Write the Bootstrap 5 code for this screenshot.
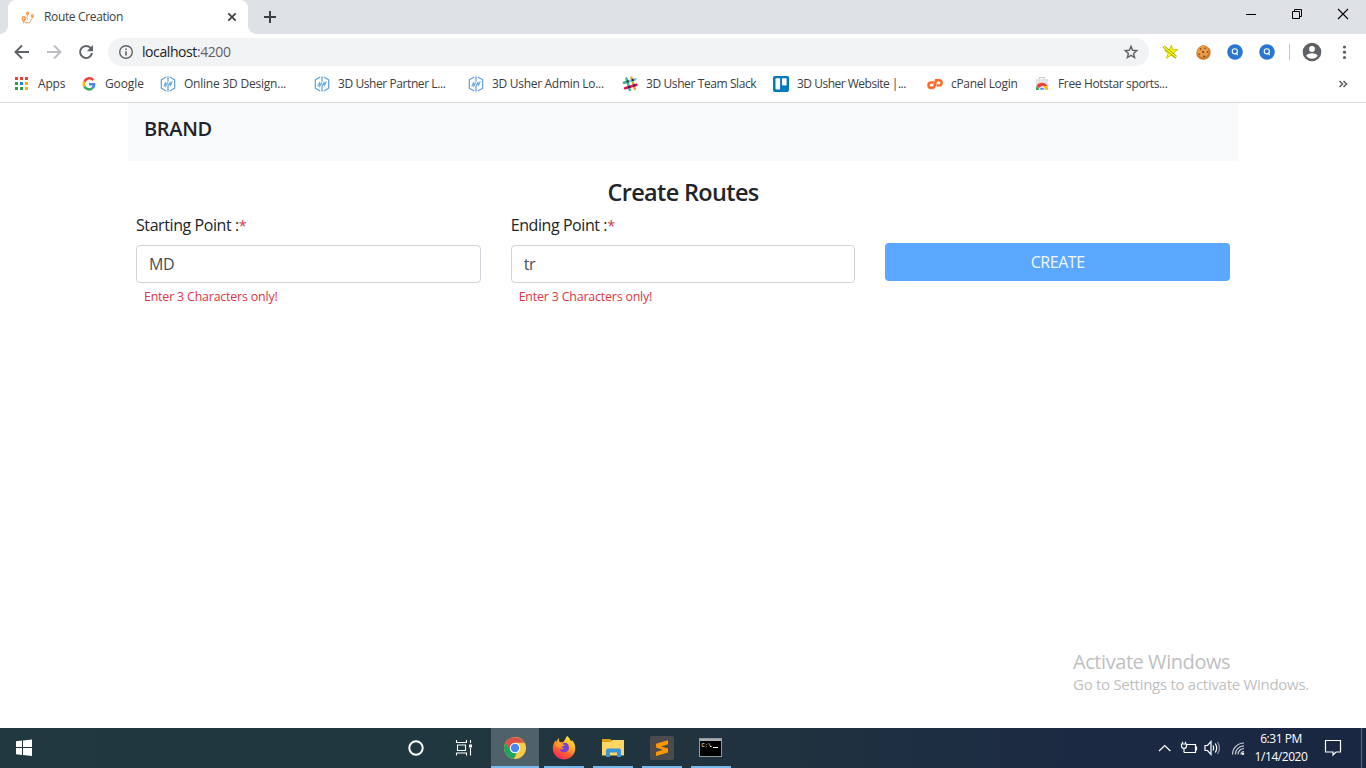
<!DOCTYPE html>
<html lang="en">
<head>
<meta charset="utf-8">
<meta name="viewport" content="width=device-width, initial-scale=1">
<title>Route Creation</title>
<link href="https://cdn.jsdelivr.net/npm/bootstrap@5.3.0/dist/css/bootstrap.min.css" rel="stylesheet">
<style>
body{font-family:"Open Sans","Noto Sans",sans-serif;color:#212529;overflow:hidden}
svg{display:block;flex:none}
.ui-text{font-size:12px;line-height:16px;white-space:nowrap;color:#3c4043}
/* browser chrome */
.tab-strip{height:34px;background:#dee1e6;padding-left:8px}
.browser-tab{width:240px;height:34px;background:#fff;border-radius:8px 8px 0 0;padding:0 10px 0 12px}
.browser-tab::before,.browser-tab::after{content:"";position:absolute;bottom:0;width:8px;height:8px}
.browser-tab::before{left:-8px;background:radial-gradient(circle at 0 0,#dee1e6 7.5px,#fff 8px)}
.browser-tab::after{right:-8px;background:radial-gradient(circle at 100% 0,#dee1e6 7.5px,#fff 8px)}
.tab-title{letter-spacing:-.35px;margin-left:8px}
.window-buttons{padding-right:4px}
.toolbar{height:36px;padding:0 13px 0 13px}
.nav-gap{margin-left:14px}
.omnibox{flex:none;width:1041px;height:28px;border-radius:14px;background:#f1f3f4;margin-left:13px;padding:0 10px}
.address{font-size:14px;line-height:20px;letter-spacing:-.42px;margin-left:8px;color:#202124}
.address span{color:#5f6368}
.extensions{padding-left:13px;gap:16px}
.bookmarks{height:33px;border-bottom:1px solid #dadce0;padding:0 14px 4px}
.bookmark svg{margin-right:8px}
.bookmark{letter-spacing:-.36px}
.bm-1{width:68px;letter-spacing:-.2px}.bm-2{width:78px;letter-spacing:-.1px}.bm-3{width:154px;letter-spacing:-.22px}
.bm-4{width:154px;letter-spacing:-.42px}.bm-5{width:154px;letter-spacing:-.3px}.bm-6{width:151px;letter-spacing:-.4px}
.bm-7{width:154px;letter-spacing:-.5px}.bm-8{width:107px;letter-spacing:-.32px}
/* page */
.page{height:625px}
.page-inner{width:1110px;margin:0 auto}
.brand-bar{height:58px;background:#f8f9fb;padding:11px 16px}
.brand-name{font-size:20px;line-height:30px;font-weight:540;letter-spacing:-.35px;color:#212529}
.page-title{font-size:23.5px;line-height:28.8px;font-weight:540;letter-spacing:-.66px;margin:17px 0 6px}
.route-form{--bs-gutter-x:30px}
.form-label{font-size:16px;line-height:24px;letter-spacing:-.42px;margin-bottom:8px;display:block}
.form-label span{font-size:14.5px;line-height:1}
.route-form .form-control{height:38px;border-color:#ced4da;border-radius:4px;color:#495057;letter-spacing:-.3px;padding:6px 12px}
.field-error{font-size:12.4px;line-height:18px;letter-spacing:-.18px;padding:5px 8px 0}
.btn-create{height:38px;margin-top:30px;border-radius:4px;background:#5aa8ff;color:#f2f8ff;border:0;letter-spacing:-.45px}
.btn-create:hover{background:#5aa8ff;color:#f2f8ff}
.activate{right:57px;bottom:34px;color:#bfbfbf;white-space:nowrap}
.activate .big-line{font-size:20px;line-height:25px;letter-spacing:-.44px}
.activate .small-line{font-size:15px;line-height:20px;letter-spacing:-.28px}
/* taskbar */
.taskbar{height:40px;background:linear-gradient(90deg,#21383f 0,#21373f 35%,#20323f 55%,#1b2943 82%,#1a2742 100%)}
.task-app{width:40px;height:40px;border-bottom:2px solid #76b9ed;padding-top:1px}
.task-app.current{width:48px;background:#4f6169}
.task-app+.task-app{margin-left:9px}
.task-app.current+.task-app{margin-left:5px}
.terminal{margin-right:2px}
.clock{width:60px;color:#fff;font-size:12px;line-height:18px;letter-spacing:-.45px;text-align:center}
</style>
</head>
<body>
<svg width="0" height="0" class="position-absolute" aria-hidden="true"><defs>
<symbol id="usher" viewBox="0 0 16 16"><path d="M6.200 1 1.300 3.800v8.400L6.200 15M9.800 1l4.900 2.800v8.400L9.800 15M8 .3v5.500M8 9.800v6" fill="none" stroke="#5b9fd6" stroke-width="1.200"/><path d="M3.800 10.800 5.800 6v4L8 6.500M8 10l2.200-4v4l2.200-4.800" fill="none" stroke="#6facdd" stroke-width="1.100"/></symbol>
<symbol id="finder" viewBox="0 0 16 16"><circle cx="8" cy="8" r="7.800" fill="#2878cf"/><circle cx="7.800" cy="7.300" r="2.600" fill="none" stroke="#fff" stroke-width="1.100"/><path d="m9 8.800 1.800 2.400" stroke="#fff" stroke-width="1.200"/></symbol>
</defs></svg>

<header>
  <div class="tab-strip d-flex">
    <div class="browser-tab position-relative d-flex align-items-center">
      <svg width="16" height="16" viewBox="0 0 16 16" fill="none" stroke="#fb9a4b"><circle cx="3.800" cy="9.200" r="1.500" stroke-width="1.500"/><path d="m2.500 10.400 1.200 3 1.500-3" stroke-width="1.200"/><circle cx="7.500" cy="4.200" r="1" stroke-width="1.300"/><path d="m6.700 5 .8 1.800L8.300 5"/><circle cx="12.300" cy="6.700" r="1" stroke-width="1.300"/><path d="m11.600 7.500.7 1.800.8-1.800M5 13.700h3.600c2.500 0 1-2.700 3.400-3.300M7.500 7.300c-1.800 1.200.7 1.800-.3 3.200"/></svg>
      <span class="ui-text tab-title flex-grow-1">Route Creation</span>
      <svg width="12" height="12" viewBox="0 0 12 12"><path d="m2.300 2.300 7.400 7.400m0-7.400L2.300 9.700" stroke="#3c4043" stroke-width="1.700"/></svg>
    </div>
    <svg class="ms-3 mt-2" width="14" height="18" viewBox="0 0 14 18"><path d="M0 9h12M6 3v12" stroke="#3c4043" stroke-width="2"/></svg>
    <div class="window-buttons ms-auto d-flex">
      <svg width="46" height="30" viewBox="0 0 46 30"><path d="M9 14.500h10" stroke="#000"/></svg>
      <svg width="46" height="30" viewBox="0 0 46 30" fill="none" stroke="#000"><path d="M9.500 11.500h7v7h-7zM11.500 11V9.500h7v7H17"/></svg>
      <svg width="33" height="30" viewBox="-4 0 33 30"><path d="m5 9 10 10m0-10L5 19" stroke="#000" stroke-width="1.100"/></svg>
    </div>
  </div>

  <div class="toolbar d-flex align-items-center">
    <svg width="18" height="18" viewBox="0 0 18 18"><path d="M16 9H3M9 2.500 2.500 9 9 15.500" fill="none" stroke="#5f6368" stroke-width="1.900"/></svg>
    <svg class="nav-gap" width="18" height="18" viewBox="0 0 18 18"><path d="M2 9h13M9 2.500 15.500 9 9 15.500" fill="none" stroke="#bcbec1" stroke-width="1.900"/></svg>
    <svg class="nav-gap" width="18" height="18" viewBox="0 0 18 18"><path d="M14 5.500A6 6 0 1 0 15 10" fill="none" stroke="#5f6368" stroke-width="2"/><path d="M16 2v6.200H9.800z" fill="#5f6368"/></svg>
    <div class="omnibox d-flex align-items-center">
      <svg width="16" height="16" viewBox="0 0 16 16"><circle cx="8" cy="8" r="6.300" fill="none" stroke="#5f6368" stroke-width="1.400"/><path d="M8 7.200v4.200M8 4.500v1.600" stroke="#5f6368" stroke-width="1.600"/></svg>
      <span class="address flex-grow-1">localhost<span>:4200</span></span>
      <svg width="16" height="16" viewBox="0 0 16 16"><path d="m8 2.300 1.600 4 4.200.3-3.200 2.800 1 4.100L8 11.300l-3.600 2.200 1-4.100-3.200-2.800 4.200-.3z" fill="none" stroke="#5f6368" stroke-width="1.400"/></svg>
    </div>
    <div class="extensions d-flex align-items-center">
      <svg width="17" height="16" viewBox="0 0 17 16"><path d="m9.300 1.200 1.300 4.600 5.200-.2-4.200 3.200 2.200 5.600-4.700-3.200-4.600 3.100 1.700-5-3.500-2.800 4.700-.4z" fill="#ff0" stroke="#c6bd00" stroke-width=".9"/><path d="m1.500 2.500 12.500 10.500" stroke="#8d8500" stroke-width="2.500"/><path d="m1.500 2.500 12.500 10.500" stroke="#ffff24" stroke-width="1.500"/></svg>
      <svg width="16" height="15" viewBox="-1 0 16 15"><path d="M7.500.3c2 0 3 1 4.300 1.800 1.700 1 2.900 2.700 2.700 4.900.2 2-.2 4-1.800 5.500-1.500 1.500-3.400 2.400-5.400 2.200-2.200.1-4.200-.8-5.500-2.500C.4 10.700.1 8.800.5 6.900.7 5 1.700 3.100 3.300 1.900 4.500 1 6 .3 7.500.3z" fill="#cf7a28"/><circle cx="7" cy="6.500" r="5.800" fill="#e99c49"/><g fill="#6f3511"><circle cx="4.500" cy="4" r=".8"/><circle cx="9" cy="3.200" r=".8"/><circle cx="7" cy="7" r="1"/><circle cx="11.500" cy="7" r=".8"/><circle cx="3.500" cy="9.300" r=".8"/><circle cx="8.200" cy="11.300" r=".9"/></g></svg>
      <svg width="16" height="16"><use href="#finder"/></svg>
      <svg width="16" height="16"><use href="#finder"/></svg>
    </div>
    <svg width="27" height="20" viewBox="0 0 27 20"><path d="M14.500 2v16" stroke="#c6c8cb"/></svg>
    <svg width="20" height="20" viewBox="0 0 20 20"><circle cx="10" cy="10" r="9.300" fill="#5f6368"/><circle cx="10" cy="7" r="2.900" fill="#fff"/><path d="M4.200 13.800C5.500 12 8 11.300 10 11.300s4.500.7 5.800 2.500c-1.300 1.900-3.500 3-5.800 3s-4.500-1.100-5.800-3z" fill="#fff"/></svg>
    <svg width="31" height="16" viewBox="-20 0 31 16" fill="#5f6368"><circle cx="2.500" cy="3" r="1.600"/><circle cx="2.500" cy="8.200" r="1.600"/><circle cx="2.500" cy="13.500" r="1.600"/></svg>
  </div>

  <nav class="bookmarks d-flex align-items-center ui-text">
    <div class="bookmark bm-1 d-flex align-items-center"><svg width="16" height="16" viewBox="0 0 16 16"><path d="M1 1h3v3H1zM6 1h3v3H6zM11 1h3v3h-3z" fill="#ea4335"/><path d="M1 6h3v3H1zM1 11h3v3H1zM6 11h3v3H6z" fill="#2e9e54"/><path d="M6 6h3v3H6z" fill="#1a84f7"/><path d="M11 6h3v3h-3zM11 11h3v3h-3z" fill="#fbae06"/></svg>Apps</div>
    <div class="bookmark bm-2 d-flex align-items-center"><svg width="15" height="16" viewBox="1 0 15 16" fill="none" stroke-width="2.500"><path d="M12.300 4.100A5.300 5.300 0 0 0 3.400 5.700" stroke="#ea4335"/><path d="M3.400 5.700a5.300 5.300 0 0 0 0 4.900" stroke="#fbbc05"/><path d="M3.400 10.600a5.300 5.300 0 0 0 8.100 1.500" stroke="#34a853"/><path d="M11.500 12.100a5 5 0 0 0 1.600-3.900H8" stroke="#4285f4"/></svg>Google</div>
    <div class="bookmark bm-3 d-flex align-items-center"><svg width="16" height="16"><use href="#usher"/></svg>Online 3D Design...</div>
    <div class="bookmark bm-4 d-flex align-items-center"><svg width="16" height="16"><use href="#usher"/></svg>3D Usher Partner L...</div>
    <div class="bookmark bm-5 d-flex align-items-center"><svg width="16" height="16"><use href="#usher"/></svg>3D Usher Admin Lo...</div>
    <div class="bookmark bm-6 d-flex align-items-center"><svg width="16" height="16" viewBox="0 0 16 16" stroke-width="2.500" stroke-linecap="round"><path d="m4.500 2.500 3.300 11.500" stroke="#3eb991"/><path d="m9.500 1.800 3.300 11.200" stroke="#e9a820"/><path d="m2 6.700 11.500-3.400" stroke="#70cadb"/><path d="m3 12.200 11.500-3.400" stroke="#e01563"/><path d="m2 6.700 3.500-1" stroke="#3eb991"/><path d="m5.600 5.600.1 0m5-1.500.1 0m1.300 5.400.1 0m-5 1.400.1 0" stroke="#30243a" stroke-linecap="square" stroke-width="2"/></svg>3D Usher Team Slack</div>
    <div class="bookmark bm-7 d-flex align-items-center"><svg width="16" height="16" viewBox="0 0 16 16"><rect width="16" height="16" rx="2" fill="#0079bf"/><rect x="2.500" y="2.300" width="4.600" height="11.200" rx="1" fill="#fff"/><rect x="9" y="2.300" width="4.600" height="7.200" rx="1" fill="#fff"/></svg>3D Usher Website |...</div>
    <div class="bookmark bm-8 d-flex align-items-center"><svg width="16" height="16" viewBox="0 0 16 16" fill="none" stroke="#ff6c2c" stroke-width="2.600"><path d="M7 6.500H4.200a2.700 2.700 0 0 0 0 5.400h1.300c1.500 0 1.800-1 2.200-2.500L9 4.300h3a2.500 2.500 0 0 1 0 5.200h-2.500"/></svg>cPanel Login</div>
    <div class="bookmark d-flex align-items-center"><svg width="16" height="16" viewBox="0 0 16 16"><path d="M5.500 3V1.500h5V3" fill="none" stroke="#ccc" stroke-width="1.200"/><path d="M2 3h12v11H2z" fill="#e4e5e6"/><path d="M2 14a6.500 6.500 0 0 1 .8-4l3.200 4z" fill="#34a853"/><path d="M2.500 10a6.300 6.300 0 0 1 11 0H8L5 12z" fill="#ea4335"/><path d="M13.500 10c.6 1.200.8 2.600.5 4H9l1-4z" fill="#fbc116"/><path d="M5.200 14a2.800 2.800 0 1 1 5.600 0z" fill="#4285f4" stroke="#fff" stroke-width=".8"/></svg>Free Hotstar sports...</div>
    <svg class="ms-auto" width="18" height="14" viewBox="0 0 18 14"><path d="m5.500 4 3 3-3 3m4-6 3 3-3 3" fill="none" stroke="#5f6368" stroke-width="1.600"/></svg>
  </nav>
</header>

<main class="page position-relative">
  <div class="page-inner">
    <div class="brand-bar"><div class="brand-name">BRAND</div></div>
    <h4 class="page-title text-center">Create Routes</h4>
    <div class="px-2">
      <form class="row route-form">
        <div class="col-4">
          <label class="form-label" for="start">Starting Point :<span class="text-danger">*</span></label>
          <input class="form-control" id="start" value="MD">
          <div class="field-error text-danger">Enter 3 Characters only!</div>
        </div>
        <div class="col-4">
          <label class="form-label" for="end">Ending Point :<span class="text-danger">*</span></label>
          <input class="form-control" id="end" value="tr">
          <div class="field-error text-danger">Enter 3 Characters only!</div>
        </div>
        <div class="col-4"><button type="button" class="btn btn-create w-100">CREATE</button></div>
      </form>
    </div>
  </div>
  <div class="activate position-absolute"><div class="big-line">Activate Windows</div><div class="small-line">Go to Settings to activate Windows.</div></div>
</main>

<footer class="taskbar d-flex">
  <svg width="392" height="40" viewBox="0 0 392 40"><path d="m16 13.200 6-.6v6.400h-6zM23 12.500l9-.9V19h-9zM16 20h6v6.900l-6-.6zM23 20h9v8l-9-.9z" fill="#fff"/></svg>
  <svg width="48" height="40"><circle cx="24" cy="20" r="6.700" fill="none" stroke="#fff" stroke-width="2"/></svg>
  <svg width="51" height="40" viewBox="0 0 51 40" fill="none" stroke="#fff" stroke-width="1.100"><path d="M16.500 12v2.500h10V12M16.500 27.500V25h10v2.500M17.500 17h8v5.500h-8zM30.500 12v3M30.500 20v7.500"/><path d="M29 16.500h3v3h-3z" fill="#fff" stroke="none"/></svg>
  <div class="task-app current d-flex justify-content-center align-items-center"><svg width="22" height="22" viewBox="0 0 22 22"><circle cx="11" cy="11" r="11" fill="#fccb45"/><path d="M1.500 5.500A11 11 0 0 1 20.500 5.700H11L6 13.500z" fill="#dc5147"/><path d="M1.500 5.500 6.300 13.500 13 15.500 9.800 21.900A11 11 0 0 1 1.500 5.500z" fill="#20a261"/><circle cx="11" cy="11" r="5.200" fill="#fff"/><circle cx="11" cy="11" r="4.200" fill="#4688f4"/></svg></div>
  <div class="task-app d-flex justify-content-center align-items-center"><svg width="24" height="24" viewBox="0 0 24 24"><defs><linearGradient id="fx" x1=".8" y1="0" x2=".25" y2="1"><stop stop-color="#fff04a"/><stop offset=".4" stop-color="#ffaa20"/><stop offset=".7" stop-color="#ff5634"/><stop offset="1" stop-color="#ee2468"/></linearGradient></defs><path d="M15 0c3 2.200 3 4 4 5l1.500-.5C23 8 23.800 11 23 14.500 21.800 20 17.500 23.500 12 23.500S1.500 19.500.8 13.500C.5 10 1.500 7 3.500 4.200L4 6.300l2.500-4.200L7.500 6l3.500.3C13 4.500 13.500 2 15 0z" fill="url(#fx)"/><path d="M12 7c2-.8 5 .8 5 4.500 0 3-2 4.800-5 4.800-2.700 0-4.300-1.600-4.500-3.300 1.300 1 3 .7 4.500-.8l-3.500-1.500C9.300 8.800 10.500 7.500 12 7z" fill="#7542d8"/><path d="M3.500 9c1.500-2.200 4-2.700 6.500-1l3 1.200c-1 .8-2.500.8-3.500 1.500L8 12.500z" fill="#ff9f24"/></svg></div>
  <div class="task-app d-flex justify-content-center align-items-center"><svg width="22" height="20" viewBox="0 0 22 20"><path d="M0 2.500h9.500L10.500 2H22v15.500H0z" fill="#ffd666"/><path d="M0 1h8.500l1 1.500L8.500 4H0z" fill="#dfa014"/><path d="M4 19v-7l1.200-1.500h12.600L19 12v7h-4v-4.500H8V19z" fill="#3995d7"/></svg></div>
  <div class="task-app d-flex justify-content-center align-items-center"><svg width="24" height="24" viewBox="0 0 24 24"><rect width="24" height="24" rx="2" fill="#4b4b4d"/><path d="m6 7.800 12-3.600v4l-7 2.200 7 2.200v3.800L6 20v-4l7-2.200-7-2.200z" fill="#ff9800"/></svg></div>
  <div class="task-app d-flex justify-content-center align-items-center"><svg class="terminal" width="23" height="19" viewBox="0 0 23 19"><rect x=".5" y=".5" width="22" height="18" fill="#000" stroke="#8f999e"/><path d="M1 1.200h21v1.600H1z" fill="#d5dadd"/><text x="2.500" y="9" font-family="Liberation Mono,monospace" font-size="5.500" fill="#fff">C:\</text><path d="M11 8.500h1.500M14 9.500h5" stroke="#fff"/></svg></div>
  <div class="ms-auto d-flex align-items-center">
    <svg width="98" height="40" viewBox="0 0 98 40" fill="none" stroke="#fff" stroke-width="1.200"><path d="m6 23 5.700-5.500 5.700 5.500"/><path d="M34 16.500h8.500v8H31M43.500 18.500v4M28.500 16h5v2c0 3-5 3-5 0zM29.500 13.800V16m3-2.200V16M31 20v4.500"/><path d="M52 17.500h2.500l3.500-4v13l-3.500-4H52zM60 17.500q1.500 2.500 0 5M62.200 15.500q3 4.500 0 9"/><path d="M64.500 14q4 6 0 12" stroke="#8b94a4"/><path d="M88 26.500a3 3 0 0 1 3-3M85 26.500a6 6 0 0 1 6-6M82.300 26.500a8.700 8.700 0 0 1 8.700-8.700M79.500 26.500A11.500 11.500 0 0 1 91 15" stroke="#c9ced6"/><circle cx="90" cy="25.700" r="1.200" fill="#fff" stroke="none"/></svg>
    <div class="clock"><div>6:31 PM</div><div>1/14/2020</div></div>
    <svg width="55" height="40" viewBox="0 0 55 40" fill="none" stroke="#fff" stroke-width="1.200"><path d="M14.500 12.500h15v11.500H25l-3 3v-3h-7.500z"/><path d="M50.500 0v40" stroke="#59647a"/></svg>
  </div>
</footer>
<script src="https://cdn.jsdelivr.net/npm/bootstrap@5.3.0/dist/js/bootstrap.bundle.min.js"></script>
</body>
</html>
